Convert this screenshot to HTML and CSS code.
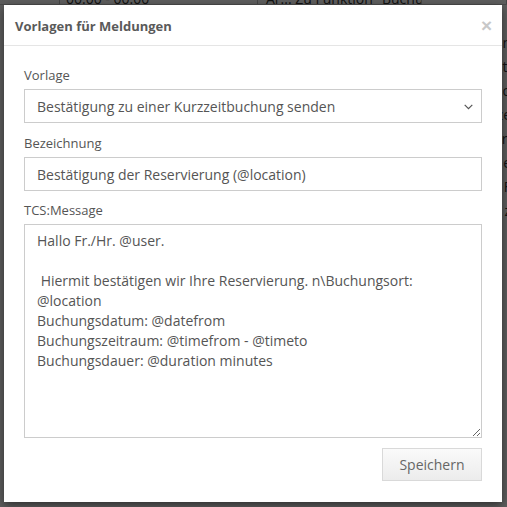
FILE: index.html
```html
<!DOCTYPE html>
<html lang="de">
<head>
<meta charset="utf-8">
<title>Vorlagen für Meldungen</title>
<link rel="stylesheet" href="styles.css">
</head>
<body>
<div class="page">
  <div class="page-row">
    <span class="cell c1"></span>
    <span class="cell c2">00:00 - 00:00</span>
    <span class="cell c3">Ar... Zu Funktion "Buchungen"</span>
    <span class="cell c4"></span>
  </div>
  <div class="page-side">
    <span>n</span><span>ti</span><span>o</span><span>ze</span><span>ri</span><span>e</span><span>F</span><span>z</span>
  </div>
</div>
<div class="backdrop"></div>
<div class="modal">
  <div class="modal-header">
    <h4 class="modal-title">Vorlagen für Meldungen</h4>
    <button class="close" type="button">×</button>
  </div>
  <div class="modal-body">
    <div class="form-group">
      <label class="label">Vorlage</label>
      <div class="select-wrap">
        <select class="control select">
          <option>Bestätigung zu einer Kurzzeitbuchung senden</option>
        </select>
        <svg class="chev" width="9" height="6" viewBox="0 0 9 6"><path d="M0.7 0.8 L4.5 4.6 L8.3 0.8" fill="none" stroke="#555" stroke-width="1.2"/></svg>
      </div>
    </div>
    <div class="form-group">
      <label class="label">Bezeichnung</label>
      <input class="control" type="text" value="Bestätigung der Reservierung (@location)">
    </div>
    <div class="form-group">
      <label class="label">TCS:Message</label>
      <textarea class="control textarea">Hallo Fr./Hr. @user.

 Hiermit bestätigen wir Ihre Reservierung. n\Buchungsort: @location
Buchungsdatum: @datefrom
Buchungszeitraum: @timefrom - @timeto
Buchungsdauer: @duration minutes</textarea>
    </div>
    <div class="actions">
      <button class="btn" type="button">Speichern</button>
    </div>
  </div>
</div>
</body>
</html>
```
FILE: styles.css
```css
* { box-sizing: border-box; }
html, body { margin: 0; padding: 0; }
body {
  width: 507px;
  height: 507px;
  overflow: hidden;
  background: #fff;
  font-family: "Open Sans", "Noto Sans", sans-serif;
  color: #555;
  position: relative;
}
.page { height: 507px; }
.page-row {
  display: flex;
  height: 5px;
  overflow: hidden;
  border-bottom: 1px solid #ccc;
}
.cell {
  font-size: 14px;
  line-height: 14px;
  margin-top: -8px;
  color: #333;
  border-right: 1px solid #bbb;
  white-space: nowrap;
  overflow: hidden;
}
.c1 { width: 60px; }
.c2 { width: 198px; padding-left: 6px; }
.c3 { width: 164px; padding-left: 8px; }
.c4 { flex: 1; }
.page-side {
  display: flex;
  flex-direction: column;
  align-items: flex-end;
  padding-top: 28px;
  gap: 4px;
  font-size: 14px;
  line-height: 20px;
  color: #333;
  margin-right: -4px;
}
.backdrop {
  position: absolute;
  inset: 0;
  background: rgba(0, 0, 0, 0.63);
}
.modal {
  position: absolute;
  left: 4px;
  top: 5px;
  width: 498px;
  height: 497px;
  background: #fff;
  box-shadow: 0 3px 9px rgba(0, 0, 0, 0.5);
  display: flex;
  flex-direction: column;
}
.modal-header {
  display: flex;
  align-items: center;
  justify-content: space-between;
  height: 41px;
  padding: 1px 10px 0 11px;
  border-bottom: 1px solid #e5e5e5;
}
.modal-title {
  margin: 0;
  font-size: 13px;
  font-weight: 700;
  color: #5a5a5a;
}
.close {
  border: 0;
  background: none;
  padding: 0;
  font-family: "Liberation Sans", Arial, sans-serif;
  font-size: 19px;
  font-weight: 700;
  line-height: 1;
  color: #c8c8c8;
  cursor: pointer;
}
.modal-body {
  padding: 20px 20px 0 20px;
  display: flex;
  flex-direction: column;
}
.form-group {
  display: flex;
  flex-direction: column;
  margin-bottom: 10px;
}
.form-group:first-child { margin-bottom: 11px; }
.label {
  font-size: 13px;
  line-height: 18px;
  margin-bottom: 5px;
  color: #555;
}
.control {
  width: 458px;
  height: 34px;
  border: 1px solid #ccc;
  border-radius: 0;
  background: #fff;
  font-family: "Open Sans", "Noto Sans", sans-serif;
  font-size: 14px;
  color: #555;
  padding: 0 12px;
  margin: 0;
  outline: none;
}
.select-wrap { position: relative; width: 458px; }
.select {
  -webkit-appearance: none;
  appearance: none;
}
.chev {
  position: absolute;
  right: 9px;
  top: 15px;
  pointer-events: none;
}
.textarea {
  height: 214px;
  padding: 6px 12px;
  line-height: 20px;
  resize: both;
}
.actions {
  display: flex;
  justify-content: flex-end;
}
.btn {
  width: 100px;
  height: 33px;
  border: 1px solid #d9d9d9;
  background: linear-gradient(#fafafa, #ececec);
  font-family: "Open Sans", "Noto Sans", sans-serif;
  font-size: 14px;
  color: #666;
  padding: 0;
}
```
